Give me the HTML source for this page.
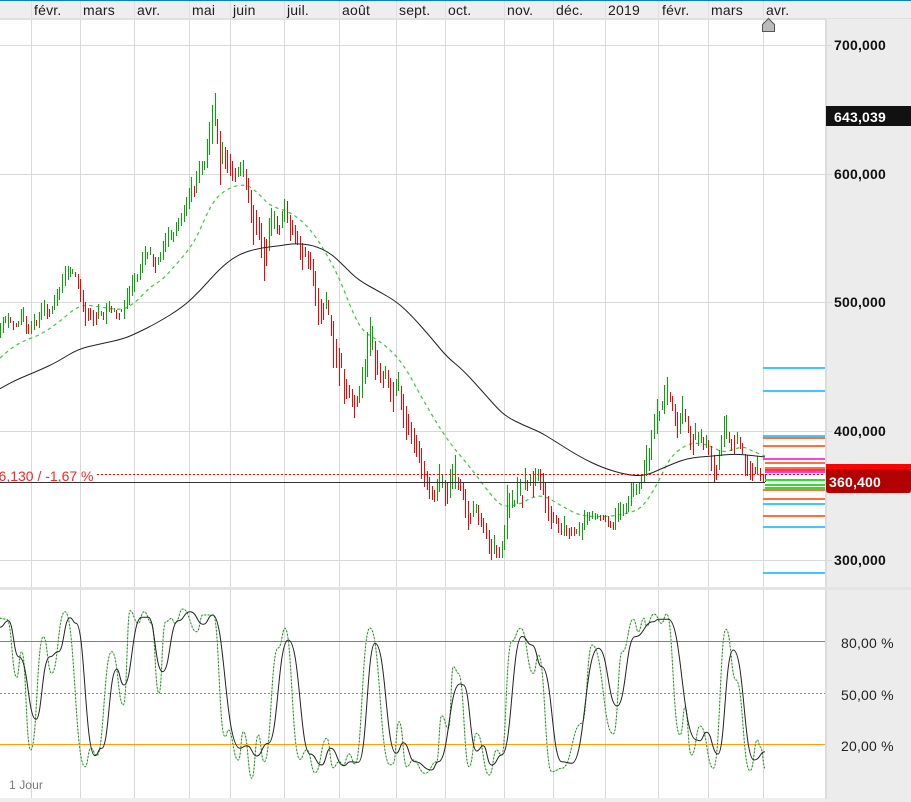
<!DOCTYPE html>
<html lang="fr">
<head>
<meta charset="utf-8">
<title>Chart</title>
<style>
html,body{margin:0;padding:0;background:#fff;width:911px;height:802px;overflow:hidden}
svg{display:block;font-family:"Liberation Sans",sans-serif}
</style>
</head>
<body>
<svg width="911" height="802" viewBox="0 0 911 802" xmlns="http://www.w3.org/2000/svg">
<rect width="911" height="802" fill="#fff"/>
<!-- grid -->
<g stroke="#d9d9d9" stroke-width="1" shape-rendering="crispEdges">
<path d="M31.5 19V798M80.5 19V798M134.5 19V798M189.5 19V798M230.5 19V798M284.5 19V798M339.5 19V798M396.5 19V798M445.5 19V798M504.5 19V798M553.5 19V798M605.5 19V798M658.5 19V798M708.5 19V798M763.5 19V798"/>
<path d="M0 45.5H832M0 174.5H832M0 302.5H832M0 431.5H832M0 560.5H832"/>
</g>
<!-- header -->
<rect x="0" y="1" width="911" height="17" fill="#eeeeee"/>
<rect x="0" y="0" width="911" height="1" fill="#0a80c0"/>
<rect x="0" y="18" width="911" height="2" fill="#e0e0e0"/>
<path d="M31.5 1V18M80.5 1V18M134.5 1V18M189.5 1V18M230.5 1V18M284.5 1V18M339.5 1V18M396.5 1V18M445.5 1V18M504.5 1V18M553.5 1V18M605.5 1V18M658.5 1V18M708.5 1V18M763.5 1V18" stroke="#e0e0e0" shape-rendering="crispEdges"/>
<g font-size="14" fill="#1c1c1c" letter-spacing=".2">
<text x="34" y="15">févr.</text><text x="83" y="15">mars</text><text x="137" y="15">avr.</text><text x="192" y="15">mai</text><text x="233" y="15">juin</text><text x="287" y="15">juil.</text><text x="342" y="15">août</text><text x="399" y="15">sept.</text><text x="448" y="15">oct.</text><text x="507" y="15">nov.</text><text x="556" y="15">déc.</text><text x="608" y="15">2019</text><text x="662" y="15">févr.</text><text x="711" y="15">mars</text><text x="766" y="15">avr.</text>
</g>
<!-- MAs -->
<path fill="none" stroke="#3fc83f" stroke-width="1.2" stroke-dasharray="3.5 3.5" d="M0,358 Q10,349 16.5,345 Q23,341 31.5,338 Q40,335 49,329 Q58,323 69,313.5 Q80,304 90,305.5 Q100,307 110,308.5 Q120,310 124,308.5 Q128,307 132.5,304 Q137,301 143.5,294 Q150,287 156,283.5 Q162,280 167.5,274 Q173,268 180,260 Q187,252 192,244.5 Q197,237 205,218.5 Q213,200 221.5,193.5 Q230,187 238.5,185.5 Q247,184 253.5,189.5 Q260,195 265,200.5 Q270,206 281.5,209.5 Q293,213 303,222.5 Q313,232 321.5,246 Q330,260 335,270 Q340,280 346.5,296.5 Q353,313 358,322.5 Q363,332 373,337.5 Q383,343 393,353 Q403,363 413,381.5 Q423,400 435,420 Q447,440 458.5,453.5 Q470,467 483.5,485 Q497,503 502,505 Q507,507 515,505 Q523,503 526.5,500.5 Q530,498 536.5,496.5 Q543,495 551.5,500 Q560,505 570,510.5 Q580,516 593.5,516.5 Q607,517 618.5,515 Q630,513 636.5,510 Q643,507 650.5,495 Q658,483 664,470 Q670,457 678.5,450.5 Q687,444 693.5,443.5 Q700,443 706.5,445 Q713,447 718,450 Q723,453 733,449.5 Q743,446 747.5,448.5 Q752,451 758.5,453.5 L765,456"/>
<!-- bars -->
<path fill="none" stroke="#00aa00" stroke-width="1" shape-rendering="crispEdges" d="M0.5 323V338M3.5 317V333M5.5 316V323M8.5 313V328M18.5 321V327M21.5 309V325M23.5 307V322M31.5 321V334M34.5 314V330M39.5 312V328M41.5 303V320M44.5 300V316M52.5 306V314M54.5 295V310M57.5 289V306M59.5 287V300M62.5 274V293M65.5 266V286M68.5 266V280M70.5 267V277M72.5 269V274M98.5 304V319M101.5 311V316M106.5 303V324M109.5 301V312M114.5 308V312M121.5 309V312M124.5 300V319M127.5 288V309M129.5 286V305M132.5 275V296M134.5 273V292M137.5 274V282M140.5 264V280M142.5 252V273M145.5 246V265M147.5 252V259M150.5 247V255M158.5 257V265M160.5 252V262M163.5 241V260M165.5 233V252M168.5 227V247M171.5 230V240M173.5 232V242M176.5 222V236M178.5 218V231M181.5 213V226M184.5 205V222M186.5 197V216M189.5 188V209M191.5 177V202M196.5 171V193M199.5 161V183M202.5 161V175M204.5 161V170M207.5 139V168M209.5 122V155M212.5 105V144M215.5 93V126M222.5 142V164M238.5 167V177M240.5 162V176M243.5 160V177M269.5 218V251M271.5 208V236M274.5 211V229M282.5 211V228M284.5 199V222M326.5 292V309M359.5 386V403M362.5 367V398M365.5 359V384M367.5 332V377M370.5 317V356M372.5 326V350M385.5 366V379M396.5 379V396M398.5 372V391M437.5 479V501M439.5 464V492M442.5 475V488M450.5 469V498M452.5 464V489M455.5 455V489M473.5 501V517M476.5 504V513M494.5 535V554M502.5 541V558M504.5 525V550M507.5 485V539M509.5 493V518M512.5 490V508M514.5 500V507M517.5 477V504M520.5 479V496M525.5 468V490M530.5 474V486M535.5 468V486M538.5 469V481M564.5 516V536M576.5 529V534M579.5 522V536M582.5 523V540M584.5 510V530M587.5 512V525M589.5 512V521M592.5 511V519M595.5 513V520M597.5 514V519M615.5 508V530M618.5 503V522M620.5 502V520M623.5 504V516M626.5 503V514M628.5 496V512M631.5 482V506M633.5 483V497M636.5 484V495M639.5 483V494M641.5 476V489M644.5 460V482M646.5 445V476M649.5 448V471M651.5 430V460M654.5 414V439M657.5 399V434M659.5 411V421M662.5 401V410M664.5 385V414M667.5 377V405M680.5 413V434M682.5 396V424M695.5 423V440M698.5 432V446M701.5 429V443M706.5 435V448M719.5 450V470M721.5 435V456M724.5 416V447M726.5 415V439M737.5 432V444M757.5 456V474"/>
<path fill="none" stroke="#ff0000" stroke-width="1" shape-rendering="crispEdges" d="M10.5 317V323M13.5 321V330M16.5 323V327M26.5 316V334M28.5 324V334M36.5 320V326M47.5 304V319M49.5 309V317M75.5 272V277M78.5 274V289M80.5 279V302M83.5 290V312M85.5 302V326M88.5 308V321M90.5 308V320M93.5 310V326M96.5 312V325M103.5 312V320M111.5 306V313M116.5 310V319M119.5 313V320M153.5 254V267M155.5 257V273M194.5 186V197M217.5 119V144M220.5 131V185M225.5 147V169M227.5 150V173M230.5 154V176M232.5 161V181M235.5 168V182M246.5 169V190M248.5 178V203M251.5 190V223M253.5 205V245M256.5 210V235M259.5 217V240M261.5 223V258M264.5 237V281M266.5 239V266M277.5 216V234M279.5 225V235M287.5 201V223M290.5 215V241M292.5 220V235M295.5 225V244M297.5 231V245M300.5 236V260M302.5 243V270M305.5 247V257M308.5 251V269M310.5 252V270M313.5 259V286M315.5 271V306M318.5 288V325M321.5 299V324M323.5 303V320M328.5 300V315M331.5 315V336M333.5 321V368M336.5 339V368M339.5 348V386M341.5 353V368M344.5 369V404M346.5 379V399M349.5 385V398M352.5 389V407M354.5 395V418M357.5 396V407M375.5 341V380M377.5 350V375M380.5 363V383M383.5 371V388M388.5 370V388M390.5 378V402M393.5 382V412M401.5 386V410M403.5 394V428M406.5 406V440M408.5 414V435M411.5 422V444M414.5 428V453M416.5 435V457M419.5 441V463M421.5 448V479M424.5 461V487M427.5 471V490M429.5 477V499M432.5 486V500M434.5 490V502M445.5 480V506M447.5 483V504M458.5 477V490M460.5 479V491M463.5 482V500M465.5 489V518M468.5 501V530M470.5 513V524M478.5 505V525M481.5 513V527M483.5 518V533M486.5 523V539M489.5 530V554M491.5 539V560M496.5 545V558M499.5 547V558M522.5 495V508M527.5 480V491M533.5 471V497M540.5 469V490M543.5 473V495M545.5 483V513M548.5 496V521M551.5 506V529M553.5 512V523M556.5 515V524M558.5 518V533M561.5 523V535M566.5 525V536M569.5 528V539M571.5 527V536M574.5 527V536M600.5 515V521M603.5 515V520M605.5 515V522M608.5 516V527M610.5 521V528M613.5 522V530M670.5 392V402M672.5 396V411M675.5 404V426M677.5 412V438M685.5 409V422M688.5 416V433M690.5 426V450M693.5 434V455M703.5 437V450M708.5 440V455M711.5 446V471M714.5 455V482M716.5 465V480M729.5 432V443M731.5 439V451M734.5 435V454M740.5 437V449M742.5 443V454M745.5 454V476M747.5 455V476M750.5 461V480M752.5 463V481M755.5 467V474M760.5 468V481M763.5 474V482M765.5 474V482"/>
<path fill="none" stroke="#222" stroke-width="1" d="M0,388.7 Q10,383 16.5,380 Q23,377 31.5,373.5 Q40,370 48.5,366 Q57,362 67.5,355.5 Q78,349 89,346.5 Q100,344 111.5,341.5 Q123,339 130,336 Q137,333 147,328 Q157,323 170,315 Q183,307 191.9,298.5 Q200.7,290 208.7,281 Q216.7,272 223.4,266 Q230,260 236.5,256.4 Q243,252.7 251.5,250.4 Q260,248 270,246.9 Q280,245.7 287.5,244.5 Q295,243.3 304,244.2 Q313,245 321.5,248.9 Q330,252.7 336.5,258.9 Q343,265 350.5,272.5 Q358,280 369,286 Q380,292 388.5,297 Q397,302 405,309.5 Q413,317 423,328.5 Q433,340 440,348.5 Q447,357 455,363.5 Q463,370 473,381 Q483,392 490,400 Q497,408 502,412.5 Q507,417 515,421 Q523,425 531.5,428.5 Q540,432 546.5,436 Q553,440 566.5,448.5 Q580,457 591.5,462.5 Q603,468 615,471.5 Q627,475 636,475.5 Q645,476 654,472 Q663,468 675,463 Q687,458 700,457 Q713,456 723,455 Q733,454 740,454.5 Q747,455 756,456 L765,457"/>
<!-- price lines -->
<path d="M0 482.5H765" stroke="#333" stroke-width="1" shape-rendering="crispEdges"/>
<path d="M97 474.5H826" stroke="#ff0000" stroke-width="1" stroke-dasharray="2 2" shape-rendering="crispEdges"/>
<text x="93.5" y="481" text-anchor="end" font-size="14" fill="#f42a2a">6,130 / -1,67 %</text>
<!-- levels -->
<g stroke-width="2" shape-rendering="crispEdges" fill="none">
<path stroke="#40c8f8" d="M763 368H826M763 391H826M763 436H826M763 504H826M763 527H826M763 573H826"/>
<path stroke="#ff7040" d="M763 438H826M763 446H826M765 463H826M765 468H826M763 490H826M763 499H826M763 516H826"/>
<path stroke="#ff40e0" d="M763 459H826M765 472H826"/>
<path stroke="#ff3060" d="M765 470H826"/>
<path stroke="#30dd30" d="M765 480H826M765 485H826M765 488H826"/>
</g>
<!-- top marker -->
<path d="M762.5 31.5V24.5L768.5 18.5L774.5 24.5V31.5Z" fill="#bbbbbb" stroke="#555" stroke-width="1"/>
<!-- separator -->
<rect x="0" y="587" width="911" height="3" fill="#e4e4e4"/>
<!-- stochastic -->
<path d="M0 641.5H826" stroke="#10a8e0" shape-rendering="crispEdges"/>
<path d="M0 693.5H826" stroke="#888" stroke-dasharray="2 2" shape-rendering="crispEdges"/>
<path d="M0 744.5H826" stroke="#ffa000" shape-rendering="crispEdges"/>
<defs>
<path id="fast" d="M0 618.3C3 618.3 3 619.3 6.7 619.3C12 619.3 12 677.3 16.7 677.3C19 677.3 19 651.7 21.7 651.7C26 651.7 26 750 30.7 750C37 750 37 636.7 43.3 636.7C47.5 636.7 47.5 673.3 51.7 673.3C58 673.3 58 611.7 65 611.7C75 611.7 75 766.7 85 766.7C88 766.7 88 748.3 90.7 748.3C94 748.3 94 755.7 96.7 755.7C104 755.7 104 651.7 111.7 651.7C118 651.7 118 705 123.3 705C127 705 127 610.7 130 610.7C134 610.7 134 623.3 138.3 623.3C141 623.3 141 611.7 144 611.7C148 611.7 148 623.3 151.7 623.3C155 623.3 155 693.3 159 693.3C162 693.3 162 621.7 165.7 621.7C169 621.7 169 618.3 171.7 618.3C173 618.3 173 623.3 175 623.3C179 623.3 179 609 182.7 609C190 609 190 631.7 196.7 631.7C200 631.7 200 615 202.7 615C208 615 208 615 213.3 615C219 615 219 736.7 225 736.7C227 736.7 227 730 228.3 730C233 730 233 760 238.3 760C241 760 241 731.7 243.3 731.7C248 731.7 248 778.3 251.7 778.3C255 778.3 255 735 258.3 735C261 735 261 761.7 264.3 761.7C271 761.7 271 648 278 648C282 648 282 628.3 285 628.3C292 628.3 292 759.3 300 759.3C303 759.3 303 750 306.7 750C311 750 311 772.7 315 772.7C321 772.7 321 738.3 326.7 738.3C330 738.3 330 767.7 333.3 767.7C336 767.7 336 761.7 339.3 761.7C341 761.7 341 765 343.3 765C346 765 346 754 349.3 754C352 754 352 764 355 764C362 764 362 628 370 628C380 628 380 765 390 765C392 765 392 763.3 393.3 763.3C396 763.3 396 721.7 399 721.7C403 721.7 403 766.7 406.7 766.7C410 766.7 410 760 413.3 760C419 760 419 773.3 425 773.3C431 773.3 431 761.7 436.7 761.7C439 761.7 439 715.7 441.7 715.7C445 715.7 445 728.3 448.3 728.3C451 728.3 451 666.7 453.3 666.7C456 666.7 456 673.3 458.3 673.3C464 673.3 464 766.7 469 766.7C473 766.7 473 733.3 476.7 733.3C483 733.3 483 775 489.3 775C493 775 493 750 496.7 750C499 750 499 755 501.7 755C506 755 506 641 512 641C516 641 516 628.3 520.7 628.3C527 628.3 527 673.3 533.3 673.3C536 673.3 536 655 538.3 655C545 655 545 771.7 551.7 771.7C557 771.7 557 768.3 561.7 768.3C572 768.3 572 723.3 581.7 723.3C587 723.3 587 645 592 645C603 645 603 734 613.3 734C618 734 618 652 622 652C628 652 628 619.3 633.3 619.3C636 619.3 636 631.7 638.3 631.7C641 631.7 641 618.3 644 618.3C645 618.3 645 626 646.7 626C650 626 650 614 654 614C658 614 658 623.3 661.7 623.3C664 623.3 664 614 666.7 614C673 614 673 735 680 735C683 735 683 706.7 685 706.7C688 706.7 688 755 691.5 755C696 755 696 726 700 726C707 726 707 768.3 713.3 768.3C720 768.3 720 629.3 726 629.3C731 629.3 731 680 736 680C743 680 743 770.7 750 770.7C754 770.7 754 740 757.3 740C759 740 759 746.7 760 746.7C763 746.7 763 768.3 765 768.3"/>
</defs>
<use href="#fast" fill="none" stroke="#b4d8b4" stroke-width="1"/>
<use href="#fast" fill="none" stroke="#128a12" stroke-width="1" stroke-dasharray="1.6 1.9"/>
<path fill="none" stroke="#222" stroke-width="1" d="M0 627.3C4 627.3 4 620.7 8.3 620.7C13.5 620.7 13.5 657 19 657C28 657 28 719.3 36 719.3C42 719.3 42 656.7 50 656.7C54 656.7 54 651.7 58.3 651.7C64 651.7 64 617.7 70 617.7C73 617.7 73 623.3 76 623.3C85 623.3 85 755.7 95 755.7C98 755.7 98 748.3 101.7 748.3C109 748.3 109 669.3 116.7 669.3C120 669.3 120 685 124 685C132 685 132 617.3 141.7 617.3C145 617.3 145 617.3 148.3 617.3C155 617.3 155 671.7 162.7 671.7C170 671.7 170 620.7 178.3 620.7C184 620.7 184 611.7 190 611.7C197 611.7 197 624.3 203.3 624.3C208 624.3 208 615 212.7 615C225 615 225 748.3 240 748.3C243 748.3 243 745.7 246.7 745.7C252 745.7 252 756 256.7 756C262 756 262 743.3 268.3 743.3C278 743.3 278 640 288.3 640C300 640 300 754 310 754C316 754 316 765 321.7 765C326 765 326 748.3 330.7 748.3C337 748.3 337 765.7 344 765.7C347 765.7 347 761.7 350 761.7C354 761.7 354 762.3 358.3 762.3C367 762.3 367 643.3 375 643.3C386 643.3 386 753.3 396 753.3C400 753.3 400 742.7 403.3 742.7C409 742.7 409 761.7 415 761.7C423 761.7 423 770 431.7 770C435 770 435 761.7 438.3 761.7C449 761.7 449 684 460 684C462 684 462 685 463.3 685C470 685 470 751 476.7 751C480 751 480 745.7 483.3 745.7C487 745.7 487 765 491.7 765C497 765 497 755 501.7 755C512 755 512 636.5 522 636.5C527 636.5 527 645 531.7 645C537 645 537 666.7 541.7 666.7C552 666.7 552 761.7 561.7 761.7C567 761.7 567 763.3 571.7 763.3C585 763.3 585 648.3 598.3 648.3C608 648.3 608 706 617 706C626 706 626 636.7 635 636.7C644 636.7 644 621.7 653.3 621.7C656 621.7 656 619.3 658.3 619.3C663 619.3 663 619.3 668.3 619.3C682 619.3 682 740 696.7 740C698 740 698 740.7 700 740.7C703 740.7 703 732.3 706.7 732.3C712 732.3 712 754 718 754C725 754 725 650 733.3 650C744 650 744 760 754 760C760 760 760 751.7 765 751.7"/>
<text x="9" y="789" font-size="12" fill="#777" letter-spacing=".1">1 Jour</text>
<!-- bottom strip -->
<rect x="0" y="798" width="911" height="4" fill="#eeeeee"/>
<!-- right axis -->
<rect x="826" y="19" width="85" height="783" fill="#ececec"/>
<rect x="825" y="19" width="2" height="780" fill="#dddddd"/>
<rect x="826" y="587" width="85" height="3" fill="#e4e4e4"/>
<path d="M827 45.5H832M827 174.5H832M827 302.5H832M827 431.5H832M827 560.5H832" stroke="#d9d9d9" shape-rendering="crispEdges"/>
<g font-size="14" font-weight="bold" fill="#111" letter-spacing=".2">
<text x="834" y="50">700,000</text>
<text x="834" y="179">600,000</text>
<text x="834" y="307">500,000</text>
<text x="834" y="436">400,000</text>
<text x="834" y="565">300,000</text>
</g>
<rect x="826" y="106" width="85" height="20" fill="#111"/>
<text x="834" y="122" font-size="14" font-weight="bold" fill="#fff" letter-spacing=".2">643,039</text>
<rect x="826" y="464" width="85" height="6" fill="#ff0000"/>
<path d="M826 469H908Q911 469 911 472V490Q911 493 908 493H829Q826 493 826 490Z" fill="#b30000"/>
<text x="829" y="487" font-size="14" font-weight="bold" fill="#fff" letter-spacing=".2">360,400</text>
<g font-size="14" fill="#222" letter-spacing=".2">
<text x="841" y="648">80,00 %</text>
<text x="841" y="700">50,00 %</text>
<text x="841" y="751">20,00 %</text>
</g>
</svg>
</body>
</html>
